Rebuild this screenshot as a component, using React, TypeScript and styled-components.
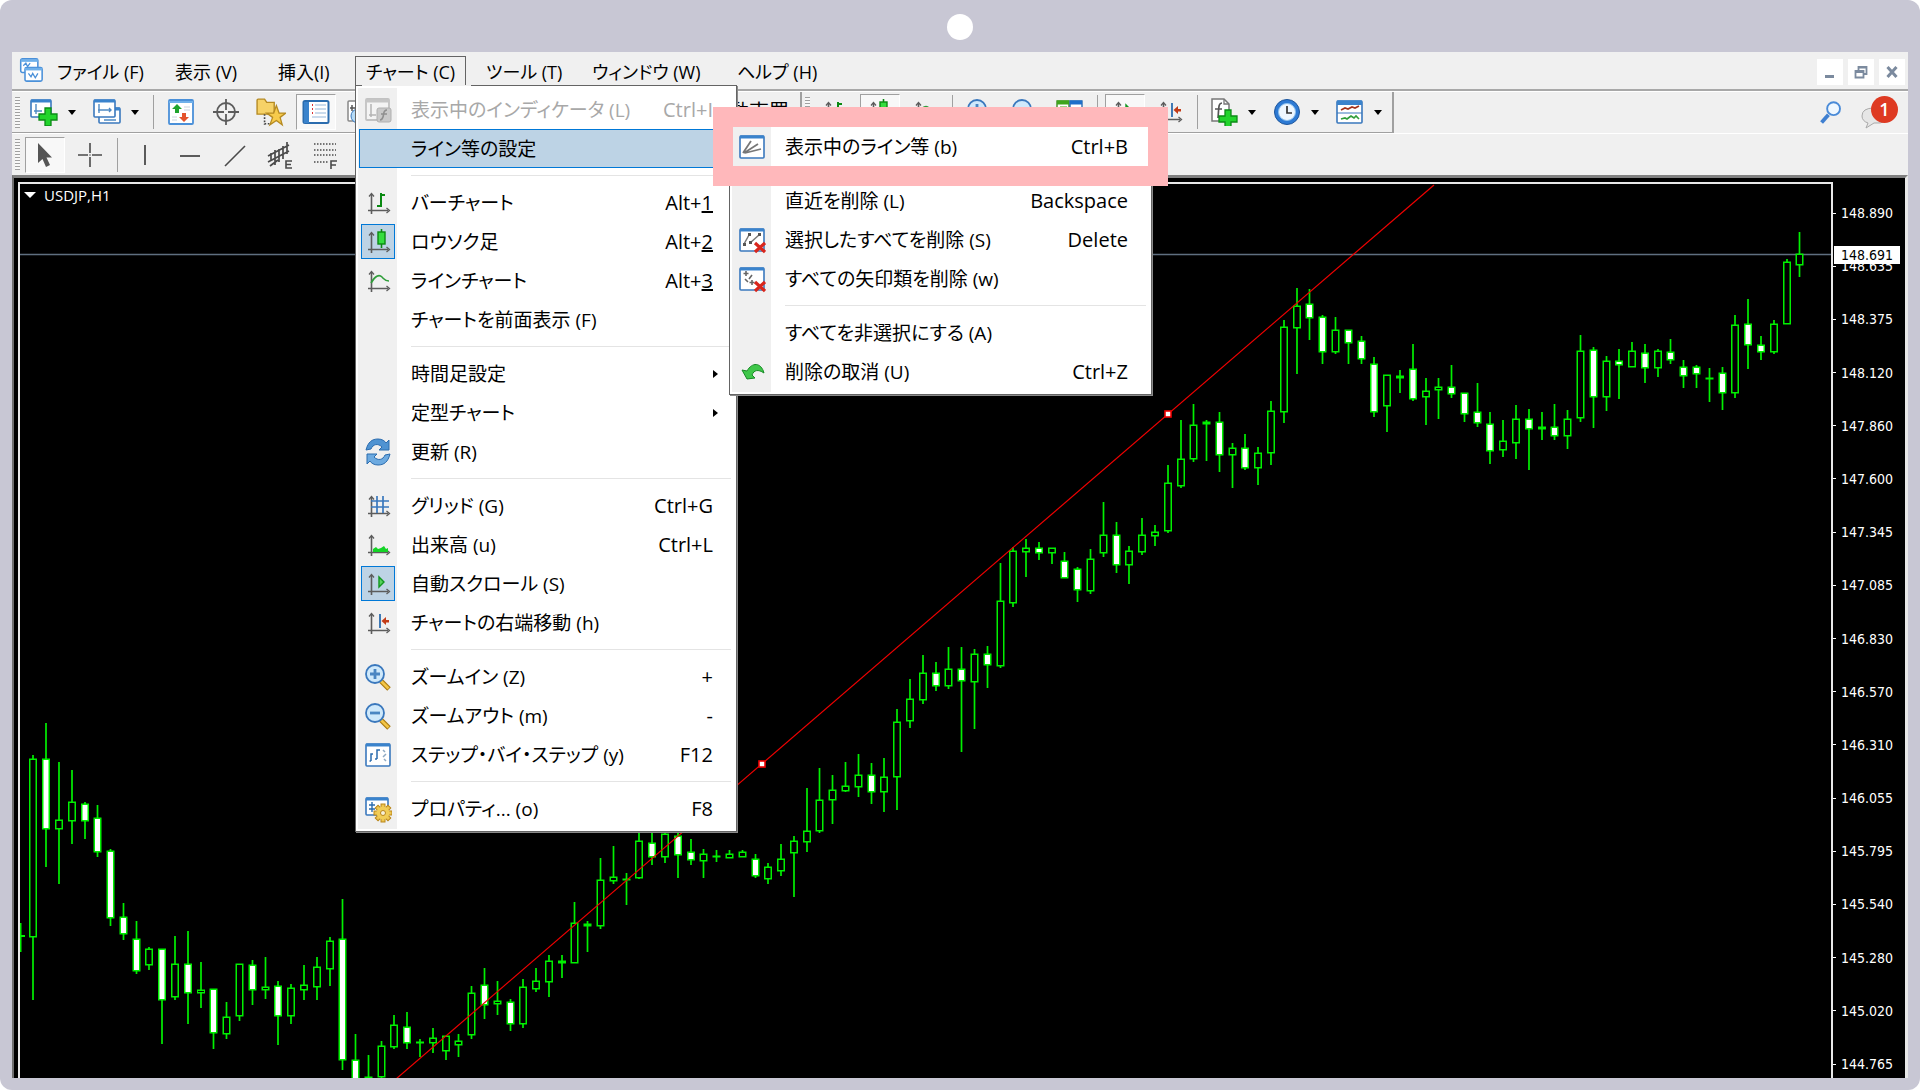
import React from "react";
import styled, { createGlobalStyle, css } from "styled-components";

const uiFont = `"Open Sans", "Noto Sans CJK JP", sans-serif`;
const priceFont = `"DejaVu Sans Condensed", "DejaVu Sans", sans-serif`;

const GlobalStyle = createGlobalStyle`
  *, *::before, *::after { box-sizing: border-box; }
  html, body { margin: 0; background: #fff; }
  body { font-family: ${uiFont}; font-feature-settings: "palt" 1; color: #000; }
  button { font: inherit; font-feature-settings: inherit; color: inherit; background: none; border: 0; padding: 0; margin: 0; }
  ul { list-style: none; margin: 0; padding: 0; }
  svg { display: block; flex: none; }
`;

/* ---------- frame ---------- */

const Device = styled.div`
  display: flex;
  flex-direction: column;
  min-height: 100vh;
  padding: 0 12px 12px;
  background: #c8c7d4;
  border-radius: 12px;
`;

const DeviceTop = styled.div`
  display: flex;
  align-items: center;
  justify-content: center;
  height: 52px;
  padding-top: 2px;
  flex: none;
`;

const Camera = styled.span`
  width: 26px;
  height: 26px;
  border-radius: 50%;
  background: #fff;
`;

const AppWindow = styled.main`
  display: flex;
  flex-direction: column;
  flex: 1;
  min-width: 0;
  background: #f0f0f0;
`;

/* ---------- menu bar ---------- */

const MenuBar = styled.nav`
  display: flex;
  align-items: flex-start;
  height: 39px;
  padding: 4px 3px 0 7px;
  border-bottom: 2px solid #a8a8a8;
`;

const MenuTabs = styled.ul`
  display: flex;
  flex: 1;
  margin-left: 3px;
`;

const MenuTabItem = styled.li<{ $width: number }>`
  position: relative;
  width: ${(p) => p.$width}px;
`;

const MenuTab = styled.button<{ $open?: boolean }>`
  height: 31px;
  padding: 0 10px;
  border: 1px solid ${(p) => (p.$open ? "#646464" : "transparent")};
  border-bottom: 0;
  font-size: 18px;
  line-height: 30px;
  white-space: nowrap;
`;

const AppIconSlot = styled.span`
  padding-top: 2px;
`;

const WindowButtons = styled.div`
  display: flex;
  gap: 5px;
  padding-top: 3px;
`;

const WindowButton = styled.button`
  display: grid;
  place-items: center;
  width: 26px;
  height: 26px;
  background: #fff;
`;

/* ---------- menus ---------- */

const menuBox = css`
  position: absolute;
  background: linear-gradient(#f0f0f0, #f0f0f0) 2px 2px / 39px calc(100% - 4px) no-repeat #fff;
  border: 1px solid #646464;
  padding: 4px 3px 3px;
  box-shadow: 1px 1px 0 #8a8a8a;
`;

const DropMenu = styled.ul`
  ${menuBox}
  top: 29px;
  left: 0;
  width: 382px;
  z-index: 10;

  &::before {
    content: "";
    position: absolute;
    top: -1px;
    left: 6px;
    width: 109px;
    height: 1px;
    background: #f0f0f0;
  }
`;

const SubMenu = styled.ul`
  ${menuBox}
  top: -7px;
  left: 370px;
  width: 423px;
  z-index: 11;
`;

const MenuRow = styled.li<{ $callout?: boolean }>`
  position: relative;
  ${(p) =>
    p.$callout &&
    css`
      z-index: 1;
      box-shadow: 0 0 0 20px #ffb8bb;
    `}
`;

const MenuButton = styled.button<{ $active?: boolean; $callout?: boolean }>`
  display: grid;
  grid-template-columns: 38px 1fr auto;
  align-items: center;
  width: 100%;
  height: 39px;
  padding-right: 20px;
  text-align: left;
  font-size: 19px;
  line-height: 24px;
  white-space: nowrap;
  ${(p) =>
    p.$active &&
    css`
      background: #bdd3e5;
      box-shadow: inset 0 0 0 1px #0078d7;
    `}
  ${(p) =>
    p.$callout &&
    css`
      background: linear-gradient(90deg, #f0f0f0 38px, #fff 38px);
    `}
  &:disabled {
    color: #a8a8a8;
  }
`;

const IconCell = styled.span<{ $checked?: boolean }>`
  display: grid;
  place-items: center;
  justify-self: center;
  width: 34px;
  height: 35px;
  ${(p) =>
    p.$checked &&
    css`
      background: #bdd3e5;
      border: 1px solid #0078d7;
    `}
`;

const MenuLabel = styled.span`
  padding-left: 14px;
`;

const Keys = styled.span`
  font-size: 20px;
`;

const SubArrow = styled.span`
  width: 0;
  height: 0;
  margin-right: -9px;
  border: 4px solid transparent;
  border-left: 5px solid #000;
  border-right: 0;
`;

const Divider = styled.li`
  height: 15px;
  padding: 7px 2px 0 52px;

  &::before {
    content: "";
    display: block;
    height: 1px;
    background: #e4e4e4;
  }
`;

/* ---------- toolbars ---------- */

const ToolbarRow = styled.div`
  display: flex;
  height: 42px;
  border-top: 1px solid #fff;
`;

const ToolGroup = styled.div<{ $basis?: number; $edge?: boolean }>`
  display: flex;
  align-items: center;
  gap: 5px;
  padding: 0 3px;
  flex: 0 0 ${(p) => (p.$basis ? `${p.$basis}px` : "auto")};
  ${(p) =>
    p.$edge &&
    css`
      border-right: 2px solid #a0a0a0;
      border-bottom: 1px solid #a0a0a0;
    `}
`;

const Grip = styled.span`
  width: 5px;
  height: 31px;
  background: repeating-linear-gradient(#a0a0a0 0 1px, #f8f8f8 1px 3px);
`;

const ToolDivider = styled.span`
  width: 5px;
  height: 34px;
  background: linear-gradient(#a0a0a0, #a0a0a0) 2px 0 / 1px 100% no-repeat;
`;

const ToolButton = styled.button<{ $pressed?: boolean }>`
  display: grid;
  place-items: center;
  width: 40px;
  height: 36px;
  ${(p) =>
    p.$pressed &&
    css`
      background: #f8f8f8;
      border-top: 1px solid #a0a0a0;
      border-left: 1px solid #a0a0a0;
      border-right: 1px solid #fff;
      border-bottom: 1px solid #fff;
    `}
`;

const SplitButton = styled.button`
  display: flex;
  align-items: center;
  gap: 10px;
  width: 58px;
  height: 36px;
  padding-left: 5px;
`;

const Caret = styled.span`
  width: 0;
  height: 0;
  border: 4px solid transparent;
  border-top: 5px solid #000;
  border-bottom: 0;
`;

const TextToolButton = styled.button`
  height: 36px;
  margin-left: auto;
  padding: 0 8px;
  font-size: 20px;
  line-height: 24px;
  font-feature-settings: normal;
`;

const ToolbarRight = styled.div`
  display: flex;
  align-items: center;
  gap: 17px;
  margin-left: auto;
  padding-right: 10px;
`;

const ChatButton = styled.button`
  position: relative;
  width: 38px;
  height: 34px;
`;

const ChatBadge = styled.span`
  position: absolute;
  top: 0;
  right: 0;
  width: 27px;
  height: 27px;
  border-radius: 50%;
  background: #de3a22;
  color: #fff;
  font-size: 18px;
  font-weight: 600;
  line-height: 26px;
  text-align: center;
`;

/* ---------- chart ---------- */

const ChartPanel = styled.section`
  display: flex;
  flex: 1;
  min-height: 0;
  padding: 4px 0 0 4px;
  background: #000;
  border-top: 3px solid #808080;
  border-left: 2px solid #707070;
  border-right: 3px solid #e8e8e8;
`;

const Plot = styled.div`
  position: relative;
  flex: 1;
  min-width: 0;
  border: 2px solid #e8e8e8;
  border-bottom: 0;
  overflow: hidden;
`;

const PlotDrawing = styled.svg`
  position: absolute;
  inset: 0;
  width: 100%;
  height: 100%;
`;

const PlotTitle = styled.button`
  position: relative;
  display: flex;
  align-items: center;
  gap: 8px;
  padding: 1px 4px;
  color: #fff;
  font-size: 15px;
  line-height: 20px;
`;

const TitleCaret = styled.span`
  width: 0;
  height: 0;
  border: 6px solid transparent;
  border-top: 6px solid #fff;
  border-bottom: 0;
`;

const PriceAxis = styled.div`
  position: relative;
  display: flex;
  flex-direction: column;
  justify-content: space-between;
  width: 72px;
  padding: 22px 0 5px;
  color: #fff;
  font-family: ${priceFont};
  font-size: 14px;
  line-height: 18px;
`;

const Price = styled.span`
  display: flex;
  align-items: center;
  gap: 5px;

  &::before {
    content: "";
    width: 3px;
    height: 1px;
    background: #fff;
  }
`;

const CurrentPrice = styled.span`
  position: absolute;
  top: 64px;
  left: 1px;
  width: 66px;
  padding-left: 7px;
  background: #fff;
  color: #000;
`;

/* ---------- icons ---------- */

type IconProps = { children?: React.ReactNode; size?: number };
const Icon = ({ children, size = 28 }: IconProps) => (
  <svg width={size} height={size} viewBox="0 0 28 28" fill="none" aria-hidden="true">
    {children}
  </svg>
);

const axesPath = (
  <g stroke="#5c5c5c" strokeWidth="1.6">
    <path d="M7.5 25V5M4 21.5H24" />
    <path d="M5 7.5 7.5 4.5 10 7.5M22.5 19 25.5 21.5 22.5 24" strokeWidth="1.3" />
  </g>
);

const BarIcon = () => (
  <Icon>
    {axesPath}
    <path d="M17 18V4M17 6H21M13 17H17" stroke="#0a8a12" strokeWidth="2" />
  </Icon>
);
const CandleIcon = () => (
  <Icon>
    {axesPath}
    <path d="M17.500 1V20" stroke="#0a8a12" strokeWidth="1.6" />
    <rect x="14" y="4" width="7" height="12" fill="#35dd3f" stroke="#0a8a12" strokeWidth="1.4" />
  </Icon>
);
const LineIcon = () => (
  <Icon>
    {axesPath}
    <path d="M7 16C11 9 15 7 18 10S21 14 25 14" stroke="#2f9e3a" strokeWidth="1.6" />
  </Icon>
);
const GridIcon = () => (
  <Icon>
    {axesPath}
    <path d="M7 9H25M7 15H25M13 4V21M19 4V21" stroke="#3a78bd" strokeWidth="1.7" />
  </Icon>
);
const VolumeIcon = () => (
  <Icon>
    {axesPath}
    <path d="M9 21V18L12 16 14 18 17 17 20 15 22 18 24 17V21Z" fill="#14d326" />
  </Icon>
);
const ScrollIcon = () => (
  <Icon>
    {axesPath}
    <path d="M15 7V17L20 12Z" fill="#57d35e" stroke="#129620" strokeWidth="1.4" />
  </Icon>
);
const ShiftIcon = () => (
  <Icon>
    {axesPath}
    <path d="M16 5V19" stroke="#2b6cae" strokeWidth="1.8" />
    <path d="M17.500 12 22 8V11H25V13.500H22V16Z" fill="#c23b17" />
  </Icon>
);
const ZoomIcon = ({ plus }: { plus?: boolean }) => (
  <Icon>
    <path d="M17 18 25 26" stroke="#a8780f" strokeWidth="5" />
    <path d="M17 18 24.500 25.500" stroke="#f2c546" strokeWidth="2.600" />
    <circle cx="11" cy="11" r="9" fill="#cfe9fb" stroke="#3a78bd" strokeWidth="1.800" />
    <path d={plus ? "M6 11H16M11 6V16" : "M6 11H16"} stroke="#4a86c2" strokeWidth="2.800" />
  </Icon>
);
const winFrame = (x = 2, y = 3, w = 24, h = 22) => (
  <g>
    <rect x={x} y={y} width={w} height={h} rx="1" fill="#fff" stroke="#3a78bd" strokeWidth="1.600" />
    <path d={`M${x} ${y + 1}H${x + w}`} stroke="#3a83cc" strokeWidth="3" />
  </g>
);
const StepIcon = () => (
  <Icon>
    {winFrame()}
    <path d="M7 20V13H9M7 20H5.500M13 18V9H16M13 18H11" stroke="#2b6cae" strokeWidth="1.500" />
    <path d="M19 9 21 11M22 13 19 16M20 18 22 20" stroke="#8fa9c2" strokeWidth="1.500" />
  </Icon>
);
const gearTeeth = Array.from({ length: 4 }, (_, i) => (
  <rect
    key={i}
    x="17"
    y="9"
    width="4"
    height="18"
    fill="#eec650"
    stroke="#b9861a"
    transform={`rotate(${i * 45} 19 18)`}
  />
));
const PropertiesIcon = () => (
  <Icon>
    {winFrame(2, 3, 22, 17)}
    <path d="M8 7V17M5 10H11M5 14H11" stroke="#2b6cae" strokeWidth="1.400" />
    {gearTeeth}
    <circle cx="19" cy="18" r="6.500" fill="#f1cd58" />
    <circle cx="19" cy="18" r="2.500" fill="#f7f0d8" stroke="#b9861a" />
  </Icon>
);
const RefreshIcon = () => (
  <Icon>
    <path d="M2 12C4 4 8 1 14 1 18 1 21 3 22 5L25 2V12H15L18 9C14 5 9 6 7 11Z" fill="#4f93d2" stroke="#2b6cae" />
    <path d="M26 16C24 24 20 27 14 27 10 27 7 25 6 23L3 26V16H13L10 19C14 23 19 22 21 17Z" fill="#6daae0" stroke="#2b6cae" />
  </Icon>
);
const IndicatorListIcon = () => (
  <Icon>
    <rect x="2" y="3" width="23" height="21" rx="1" fill="#f4f4f4" stroke="#c2c2c2" strokeWidth="1.800" />
    <path d="M2 5H25" stroke="#c6c6c6" strokeWidth="3" />
    <path d="M7 8V21M5 19H12" stroke="#b4b4b4" strokeWidth="1.500" />
    <rect x="13" y="12" width="14" height="14" rx="2" fill="#c9c9c9" stroke="#b0b0b0" />
    <path d="M23 14C19 14 20 18 19 21S17 24 16 24M17 18H23" stroke="#8f8f8f" strokeWidth="1.600" />
  </Icon>
);
const LinesListIcon = () => (
  <Icon>
    {winFrame()}
    <path d="M5 20 13 8M6 20 20 11M7 20 23 16" stroke="#777" strokeWidth="1.800" />
  </Icon>
);
const redCross = <path d="M17 17 27 26M27 17 17 26" stroke="#d9261c" strokeWidth="3.200" />;
const LinesDeleteIcon = () => (
  <Icon>
    {winFrame()}
    <path d="M6 18 11 9M12 17 21 9" stroke="#777" strokeWidth="1.500" />
    <path d="M5 17H8V20H5ZM10 7H13V10H10ZM11 15H14V18H11ZM20 7H23V10H20Z" fill="#555" />
    {redCross}
  </Icon>
);
const ArrowsDeleteIcon = () => (
  <Icon>
    {winFrame()}
    <path d="M8 6V11M5.500 8.500H10.500M14 15V20M11.500 17.500H16.500M7 14 10 17M11 14 14 10" stroke="#666" strokeWidth="1.600" />
    {redCross}
  </Icon>
);
const UndoIcon = () => (
  <Icon>
    <path d="M4 12 9 21 17 20 14 17C16 12 20 11 26 15 23 4 14 4 9 13Z" fill="#3fc74a" stroke="#168a24" />
  </Icon>
);

const AppIcon = () => (
  <Icon size={24}>
    <rect x="2" y="1" width="20" height="16" rx="2" fill="#fff" stroke="#4a90d9" strokeWidth="1.800" />
    <path d="M2 3H22" stroke="#6fb0ea" strokeWidth="3" />
    <path d="M5 9 8 6 10 10 13 6" stroke="#4a90d9" strokeWidth="1.500" />
    <rect x="7" y="11" width="20" height="16" rx="2" fill="#fff" stroke="#4a90d9" strokeWidth="1.800" />
    <path d="M7 13H27" stroke="#6fb0ea" strokeWidth="3" />
    <path d="M11 18 14 22 16 18 19 23 22 18" stroke="#4a90d9" strokeWidth="1.500" />
  </Icon>
);
const plusMark = (x: number, y: number) => (
  <path
    d={`M${x - 3} ${y - 9}h6v6h6v6h-6v6h-6v-6h-6v-6h6z`}
    fill="#22d42c"
    stroke="#0b8a16"
    strokeWidth="1.3"
  />
);
const NewChartIcon = () => (
  <Icon>
    {winFrame(1, 2, 20, 17)}
    <path d="M6 6V16M4 13H12" stroke="#4f8ac4" strokeWidth="1.400" />
    {plusMark(18, 19)}
  </Icon>
);
const ProfilesIcon = () => (
  <Icon>
    {winFrame(6, 10, 21, 15)}
    {winFrame(1, 2, 21, 17)}
    <path d="M6 6V15M5 12H18M16 10 18 12 16 14M11 22H23" stroke="#4f8ac4" strokeWidth="1.400" />
  </Icon>
);
const MarketWatchIcon = () => (
  <Icon>
    <rect x="2" y="2" width="24" height="24" rx="1" fill="#fff" stroke="#4a90d9" strokeWidth="1.800" />
    <path d="M2 4H26" stroke="#6fb0ea" strokeWidth="2" />
    <path d="M17 9H23M17 12H23M5 19H10M5 22H10" stroke="#c9d3de" />
    <path d="M10 6 15 11H12V15H8V11H5Z" fill="#1fa32d" />
    <path d="M17 24 12 19H15V15H19V19H22Z" fill="#e4532d" />
  </Icon>
);
const DataWindowIcon = () => (
  <Icon>
    <circle cx="14" cy="14" r="9" stroke="#5c5c5c" strokeWidth="1.800" />
    <path d="M14 1V12M14 16V27M1 14H12M16 14H27" stroke="#5c5c5c" strokeWidth="1.800" />
  </Icon>
);
const NavigatorIcon = () => (
  <Icon size={30}>
    <path d="M1 3Q1 2 2 2H8L10 5H17V16H1Z" fill="#f6d267" stroke="#b58a22" strokeWidth="1.300" />
    <path d="M8 16V26M8 25H13" stroke="#444" strokeWidth="1.500" strokeDasharray="1.500 1.500" />
    <path d="M19 8 21.500 15H28L22.500 19 24.500 26 19 22 13 26 15.500 19 10 15H16.500Z" fill="#f7cb4b" stroke="#b58a22" strokeWidth="1.200" />
  </Icon>
);
const TerminalIcon = () => (
  <Icon>
    <rect x="1.500" y="3" width="25" height="22" rx="1.500" fill="#fff" stroke="#2b6cae" strokeWidth="2" />
    <path d="M2 4H7V25H2Z" fill="#3a83cc" />
    <path d="M10 7H11M10 11H11M10 15H11" stroke="#d33" strokeWidth="2" />
    <path d="M13 7H24M13 11H24M13 15H24M10 19H24" stroke="#b9cfe6" strokeWidth="1.300" />
  </Icon>
);
const TesterIcon = () => (
  <Icon>
    <rect x="1" y="3" width="22" height="20" rx="1" fill="#fff" stroke="#888" strokeWidth="1.500" />
    <path d="M5 7V13M3 10H8" stroke="#555" strokeWidth="1.500" />
    <circle cx="11" cy="18" r="7" fill="#b8dcf6" stroke="#3a78bd" />
  </Icon>
);
const TileIcon = () => (
  <Icon>
    <rect x="1" y="3" width="12" height="11" fill="#fff" stroke="#3c8d1d" strokeWidth="1.400" />
    <path d="M1 4.500H13" stroke="#3fa51c" strokeWidth="4" />
    <path d="M4 9H11" stroke="#7cc45f" strokeWidth="1.500" />
    <rect x="14" y="3" width="12" height="11" fill="#fff" stroke="#2b6cae" strokeWidth="1.400" />
    <path d="M14 4.500H26" stroke="#1f6fca" strokeWidth="4" />
    <rect x="1" y="15" width="12" height="10" fill="#fff" stroke="#2b6cae" strokeWidth="1.400" />
    <rect x="14" y="15" width="12" height="10" fill="#fff" stroke="#3c8d1d" strokeWidth="1.400" />
  </Icon>
);
const AddIndicatorIcon = () => (
  <Icon>
    <path d="M2 1H14L19 6V23H2Z" fill="#fff" stroke="#777" strokeWidth="1.500" />
    <path d="M14 1V6H19" stroke="#777" strokeWidth="1.300" />
    <path d="M12 5C8 5 9 10 8 20M5 11H12" stroke="#555" strokeWidth="1.700" />
    {plusMark(18, 21)}
  </Icon>
);
const ClockIcon = () => (
  <Icon>
    <circle cx="14" cy="14" r="12.500" fill="#2d7ad4" stroke="#1c559c" />
    <circle cx="14" cy="14" r="8.500" fill="#eef7ff" stroke="#8fc2ee" />
    <path d="M14 8V15H19" stroke="#333" strokeWidth="1.700" />
  </Icon>
);
const TemplateIcon = () => (
  <Icon>
    {winFrame(1, 3, 25, 22)}
    <path d="M1 5H26" stroke="#3a83cc" strokeWidth="4" />
    <path d="M1 15H26" stroke="#3a78bd" />
    <path d="M5 12 9 10 12 11 16 9 19 10 23 8" stroke="#a3321b" strokeWidth="1.700" />
    <path d="M5 21 9 20 11 21 15 18 18 20 20 18 23 21" stroke="#2f9e3a" strokeWidth="1.700" />
  </Icon>
);
const SearchIcon = () => (
  <Icon size={24}>
    <path d="M11 16 3 25" stroke="#3f7fd0" strokeWidth="4.500" />
    <circle cx="17" cy="9" r="7.500" fill="#f0f8ff" stroke="#4a8bd8" strokeWidth="2.200" />
  </Icon>
);
const ChatIcon = () => (
  <svg width="30" height="34" viewBox="0 0 30 34" aria-hidden="true">
    <path d="M2 20Q2 12 14 12T27 20 14 27L6 32 8 27Q2 25 2 20Z" fill="#e6e6e6" stroke="#a9a9a9" />
  </svg>
);

const CursorIcon = () => (
  <Icon>
    <path d="M7 2V22L11.500 18 15 26 19 24 15.500 16.500H21Z" fill="#555" />
  </Icon>
);
const CrossIcon = () => (
  <Icon>
    <path d="M14 2V12M14 16V26M2 14H12M16 14H26M14 13.500V14.500" stroke="#4a4a4a" strokeWidth="1.600" />
  </Icon>
);
const VLineIcon = () => (
  <Icon>
    <path d="M14 4V24" stroke="#4a4a4a" strokeWidth="1.800" />
  </Icon>
);
const HLineIcon = () => (
  <Icon>
    <path d="M4 15H24" stroke="#4a4a4a" strokeWidth="1.800" />
  </Icon>
);
const TrendIcon = () => (
  <Icon>
    <path d="M4 25 24 5" stroke="#4a4a4a" strokeWidth="1.600" />
  </Icon>
);
const ChannelIcon = () => (
  <Icon>
    <path d="M2 15 23 4M2 21 23 10M5 12V20M9 9V24M13 8V21M17 5V18M21 1V13M4 25 12 19" stroke="#4a4a4a" strokeWidth="1.700" />
    <path d="M26 20H20V27H26M20 23.500H25" stroke="#4a4a4a" strokeWidth="1.600" />
  </Icon>
);
const FiboIcon = () => (
  <Icon>
    <path d="M3 3H25M3 9H25M3 14H25M3 21H18" stroke="#4a4a4a" strokeWidth="1.500" strokeDasharray="1.500 1.500" />
    <path d="M20 28V20H26M20 24H25" stroke="#4a4a4a" strokeWidth="1.600" />
  </Icon>
);

/* ---------- data ---------- */

/* [high, body top, body bottom, low, filled] for each hourly bar, in drawing units */
const bars: number[][] = [
  [755,759,937,1000,0],[723,759,829,867,1],[762,820,829,884,0],[770,802,821,844,0],[802,804,821,839,1],
  [805,818,852,857,1],[849,851,918,926,1],[903,917,934,940,1],[921,939,971,974,1],[947,949,965,970,0],
  [949,949,1000,1044,1],[936,964,997,1000,0],[931,964,993,1024,1],[962,990,993,1008,0],[989,989,1033,1049,1],
  [1002,1017,1034,1039,0],[964,964,1016,1021,0],[960,965,990,1005,1],[957,987,990,999,0],[981,986,1016,1045,1],
  [984,988,1016,1024,0],[965,985,990,1000,0],[957,967,987,1000,0],[937,941,969,986,0],[899,939,1060,1070,1],
  [1034,1060,1090,1090,1],[1055,1077,1090,1090,0],[1041,1046,1077,1078,0],[1015,1025,1047,1049,0],[1012,1027,1043,1049,1],
  [1039,1042,1043,1057,0],[1028,1038,1043,1053,0],[1036,1036,1051,1060,0],[1034,1041,1045,1057,0],[986,993,1035,1039,0],
  [968,985,1005,1019,1],[981,1001,1004,1015,0],[999,1002,1024,1031,1],[979,987,1024,1028,0],[968,981,989,992,0],
  [955,961,982,997,0],[955,961,963,978,0],[902,923,963,963,0],[921,924,926,952,0],[858,880,926,929,0],
  [846,877,881,884,0],[873,879,879,905,0],[830,841,878,879,0],[830,843,857,865,1],[830,834,857,863,0],
  [832,836,855,878,1],[839,852,860,865,1],[849,854,861,878,0],[850,856,857,862,0],[850,854,858,858,0],
  [850,852,857,857,0],[854,859,876,878,1],[863,867,879,884,0],[844,859,871,876,0],[836,841,853,897,0],
  [788,831,842,852,0],[768,800,831,833,0],[775,790,800,824,0],[762,786,791,792,0],[754,775,787,797,0],
  [763,775,792,804,1],[758,777,792,812,0],[709,722,777,810,0],[679,699,721,728,0],[655,673,700,704,0],
  [662,673,686,691,1],[647,669,686,689,0],[647,669,681,752,1],[649,654,682,729,0],[646,654,665,688,1],
  [563,601,666,668,0],[547,551,603,607,0],[539,548,552,577,0],[542,548,553,560,1],[548,548,553,564,0],
  [552,561,578,578,1],[567,569,590,602,1],[549,559,591,594,0],[502,535,553,557,0],[522,535,565,573,1],
  [546,551,565,584,0],[518,535,552,555,0],[525,532,536,546,0],[465,483,531,533,0],[420,459,486,488,0],
  [404,425,459,462,0],[420,422,424,461,0],[412,422,455,472,1],[443,448,455,488,0],[434,448,468,470,1],
  [447,453,468,485,0],[401,411,453,465,0],[320,327,412,423,0],[288,306,328,374,0],[289,304,318,340,1],
  [315,317,352,364,1],[317,330,352,354,0],[330,330,343,364,1],[336,341,359,364,1],[357,364,412,417,1],
  [375,375,406,432,0],[370,376,378,393,0],[344,369,399,401,1],[378,391,397,425,0],[378,387,390,419,0],
  [365,387,394,398,1],[393,393,414,422,1],[383,412,423,427,1],[412,424,451,464,1],[420,441,450,457,0],
  [405,419,443,459,0],[409,419,429,470,1],[412,427,429,440,0],[404,427,436,440,1],[410,419,436,449,0],
  [335,351,418,422,0],[347,350,397,428,1],[356,361,397,411,0],[349,361,365,399,1],[342,351,367,367,0],
  [344,353,368,383,1],[349,351,368,377,0],[339,352,360,364,1],[360,367,376,388,1],[365,367,374,388,1],
  [368,378,379,402,0],[367,373,393,410,1],[315,325,393,398,0],[299,324,345,369,1],[336,345,352,360,1],
  [320,324,352,354,0],[259,262,324,324,0],[232,254,265,277,0],
];

const firstX = 33.2;
const barStep = 12.894;

const prices = [
  "148.890", "148.635", "148.375", "148.120", "147.860", "147.600", "147.345", "147.085", "146.830",
  "146.570", "146.310", "146.055", "145.795", "145.540", "145.280", "145.020", "144.765",
];

const Candles = () => (
  <PlotDrawing aria-label="USDJP H1 chart">
    <g transform="translate(-20 -184)">
      <path d="M0 254.500H4000" stroke="#5f6f80" strokeWidth="1.500" />
      <path d="M20.500 923V952M20 936H25" stroke="#00ee00" strokeWidth="2" />
      {bars.map(([high, top, bottom, low, filled], i) => {
        const x = Math.round((firstX + barStep * i) * 2) / 2;
        return (
          <g key={i} stroke="#00f000">
            <path d={`M${x} ${high}V${low}`} strokeWidth="1.7" />
            <rect
              x={x - 3.25}
              y={top + 0.25}
              width="6.5"
              height={Math.max(bottom - top - 0.5, 0.5)}
              fill={filled ? "#fff" : "#000"}
              strokeWidth="1.5"
            />
          </g>
        );
      })}
      <path d="M396 1079 1434 185" stroke="#f00000" strokeWidth="1.200" />
      <g fill="#fff" stroke="#f00000" strokeWidth="1.600">
        <rect x="759" y="761" width="6" height="6" />
        <rect x="1165" y="411" width="6" height="6" />
      </g>
    </g>
  </PlotDrawing>
);

type Entry = {
  label: string;
  keys?: React.ReactNode;
  icon?: React.ReactNode;
  checked?: boolean;
  disabled?: boolean;
  active?: boolean;
  arrow?: boolean;
  callout?: boolean;
  sub?: Entry[][];
};

const lineMenu: Entry[][] = [
  [{ label: "表示中のライン等 (b)", keys: "Ctrl+B", icon: <LinesListIcon />, callout: true }],
  [
    { label: "直近を削除 (L)", keys: "Backspace" },
    { label: "選択したすべてを削除 (S)", keys: "Delete", icon: <LinesDeleteIcon /> },
    { label: "すべての矢印類を削除 (w)", icon: <ArrowsDeleteIcon /> },
  ],
  [
    { label: "すべてを非選択にする (A)" },
    { label: "削除の取消 (U)", keys: "Ctrl+Z", icon: <UndoIcon /> },
  ],
];

const chartMenu: Entry[][] = [
  [
    { label: "表示中のインディケータ (L)", keys: "Ctrl+I", icon: <IndicatorListIcon />, disabled: true },
    { label: "ライン等の設定", active: true, sub: lineMenu },
  ],
  [
    { label: "バーチャート", keys: <>Alt+<u>1</u></>, icon: <BarIcon /> },
    { label: "ロウソク足", keys: <>Alt+<u>2</u></>, icon: <CandleIcon />, checked: true },
    { label: "ラインチャート", keys: <>Alt+<u>3</u></>, icon: <LineIcon /> },
    { label: "チャートを前面表示 (F)" },
  ],
  [
    { label: "時間足設定", arrow: true },
    { label: "定型チャート", arrow: true },
    { label: "更新 (R)", icon: <RefreshIcon /> },
  ],
  [
    { label: "グリッド (G)", keys: "Ctrl+G", icon: <GridIcon /> },
    { label: "出来高 (u)", keys: "Ctrl+L", icon: <VolumeIcon /> },
    { label: "自動スクロール (S)", icon: <ScrollIcon />, checked: true },
    { label: "チャートの右端移動 (h)", icon: <ShiftIcon /> },
  ],
  [
    { label: "ズームイン (Z)", keys: "+", icon: <ZoomIcon plus /> },
    { label: "ズームアウト (m)", keys: "-", icon: <ZoomIcon /> },
    { label: "ステップ・バイ・ステップ (y)", keys: "F12", icon: <StepIcon /> },
  ],
  [{ label: "プロパティ... (o)", keys: "F8", icon: <PropertiesIcon /> }],
];

const Entries = ({ groups }: { groups: Entry[][] }) => (
  <>
    {groups.map((group, g) => (
      <React.Fragment key={g}>
        {g > 0 && <Divider role="separator" />}
        {group.map((e) => (
          <MenuRow key={e.label} $callout={e.callout} role="none">
            <MenuButton role="menuitem" $active={e.active} $callout={e.callout} disabled={e.disabled}>
              <IconCell $checked={e.checked}>{e.icon}</IconCell>
              <MenuLabel>{e.label}</MenuLabel>
              {e.arrow ? <SubArrow /> : <Keys>{e.keys}</Keys>}
            </MenuButton>
            {e.sub && (
              <SubMenu role="menu">
                <Entries groups={e.sub} />
              </SubMenu>
            )}
          </MenuRow>
        ))}
      </React.Fragment>
    ))}
  </>
);

const tabs = [
  { label: "ファイル (F)", width: 118 },
  { label: "表示 (V)", width: 103 },
  { label: "挿入(I)", width: 88 },
  { label: "チャート (C)", width: 120, open: true },
  { label: "ツール (T)", width: 106 },
  { label: "ウィンドウ (W)", width: 145 },
  { label: "ヘルプ (H)", width: 110 },
];

const Split = ({ label, children }: { label: string; children: React.ReactNode }) => (
  <SplitButton aria-label={label}>
    {children}
    <Caret />
  </SplitButton>
);

export default function App() {
  return (
    <>
      <GlobalStyle />
      <Device lang="ja">
        <DeviceTop>
          <Camera />
        </DeviceTop>
        <AppWindow>
          <MenuBar>
            <AppIconSlot>
              <AppIcon />
            </AppIconSlot>
            <MenuTabs role="menubar">
              {tabs.map((t) => (
                <MenuTabItem key={t.label} $width={t.width} role="none">
                  <MenuTab role="menuitem" $open={t.open}>
                    {t.label}
                  </MenuTab>
                  {t.open && (
                    <DropMenu role="menu">
                      <Entries groups={chartMenu} />
                    </DropMenu>
                  )}
                </MenuTabItem>
              ))}
            </MenuTabs>
            <WindowButtons>
              <WindowButton aria-label="最小化">
                <svg width="14" height="14" viewBox="0 0 14 14">
                  <path d="M2 11.500H11" stroke="#7b8a9e" strokeWidth="3" />
                </svg>
              </WindowButton>
              <WindowButton aria-label="元に戻す">
                <svg width="14" height="14" viewBox="0 0 14 14" fill="none" stroke="#7b8a9e">
                  <path d="M4.500 5V2H12.500V9H10M4.500 2.500H12.500" strokeWidth="1.800" />
                  <path d="M1.500 6H9.500V12.500H1.500ZM1.500 7H9.500" strokeWidth="1.800" />
                </svg>
              </WindowButton>
              <WindowButton aria-label="閉じる">
                <svg width="14" height="14" viewBox="0 0 14 14">
                  <path d="M2.500 2 11.500 12M11.500 2 2.500 12" stroke="#7b8a9e" strokeWidth="3" />
                </svg>
              </WindowButton>
            </WindowButtons>
          </MenuBar>

          <ToolbarRow role="toolbar">
            <ToolGroup $basis={790} $edge>
              <Grip />
              <Split label="新規チャート"><NewChartIcon /></Split>
              <Split label="チャートの組表示"><ProfilesIcon /></Split>
              <ToolDivider />
              <ToolButton aria-label="気配値表示"><MarketWatchIcon /></ToolButton>
              <ToolButton aria-label="データウィンドウ"><DataWindowIcon /></ToolButton>
              <ToolButton aria-label="ナビゲーター"><NavigatorIcon /></ToolButton>
              <ToolButton aria-label="ターミナル" $pressed><TerminalIcon /></ToolButton>
              <ToolButton aria-label="ストラテジーテスター"><TesterIcon /></ToolButton>
              <TextToolButton>自動売買</TextToolButton>
            </ToolGroup>
            <ToolGroup $edge>
              <Grip />
              <ToolButton aria-label="バーチャート"><BarIcon /></ToolButton>
              <ToolButton aria-label="ロウソク足" $pressed><CandleIcon /></ToolButton>
              <ToolButton aria-label="ラインチャート"><LineIcon /></ToolButton>
              <ToolDivider />
              <ToolButton aria-label="ズームイン"><ZoomIcon plus /></ToolButton>
              <ToolButton aria-label="ズームアウト"><ZoomIcon /></ToolButton>
              <ToolButton aria-label="整列"><TileIcon /></ToolButton>
              <ToolDivider />
              <ToolButton aria-label="自動スクロール" $pressed><ScrollIcon /></ToolButton>
              <ToolButton aria-label="チャートの右端移動"><ShiftIcon /></ToolButton>
              <ToolDivider />
              <Split label="インディケータ"><AddIndicatorIcon /></Split>
              <Split label="時間足設定"><ClockIcon /></Split>
              <Split label="定型チャート"><TemplateIcon /></Split>
            </ToolGroup>
            <ToolbarRight>
              <button aria-label="検索"><SearchIcon /></button>
              <ChatButton aria-label="通知">
                <ChatIcon />
                <ChatBadge>1</ChatBadge>
              </ChatButton>
            </ToolbarRight>
          </ToolbarRow>

          <ToolbarRow role="toolbar">
            <ToolGroup>
              <Grip />
              <ToolButton aria-label="カーソル" $pressed><CursorIcon /></ToolButton>
              <ToolButton aria-label="クロスヘア"><CrossIcon /></ToolButton>
              <ToolDivider />
              <ToolButton aria-label="垂直線"><VLineIcon /></ToolButton>
              <ToolButton aria-label="水平線"><HLineIcon /></ToolButton>
              <ToolButton aria-label="トレンドライン"><TrendIcon /></ToolButton>
              <ToolButton aria-label="チャネル"><ChannelIcon /></ToolButton>
              <ToolButton aria-label="フィボナッチ"><FiboIcon /></ToolButton>
            </ToolGroup>
          </ToolbarRow>

          <ChartPanel>
            <Plot>
              <Candles />
              <PlotTitle>
                <TitleCaret />
                USDJP,H1
              </PlotTitle>
            </Plot>
            <PriceAxis>
              {prices.map((p) => (
                <Price key={p}>{p}</Price>
              ))}
              <CurrentPrice>148.691</CurrentPrice>
            </PriceAxis>
          </ChartPanel>
        </AppWindow>
      </Device>
    </>
  );
}
